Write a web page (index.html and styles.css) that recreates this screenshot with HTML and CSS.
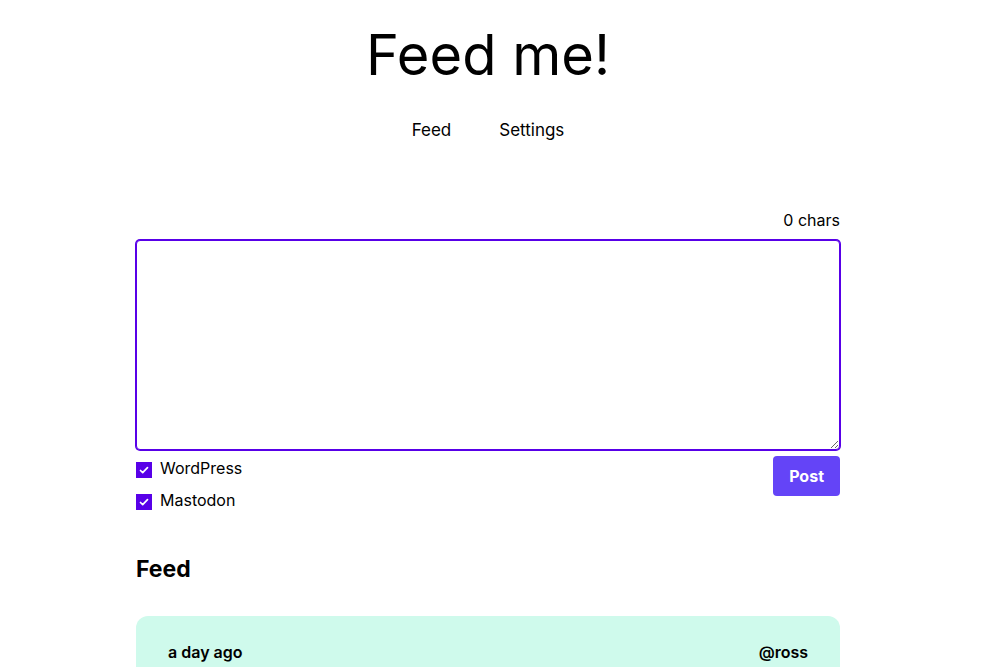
FILE: index.html
```html
<!DOCTYPE html>
<html lang="en">
<head>
<meta charset="utf-8">
<meta name="viewport" content="width=device-width, initial-scale=1">
<title>Feed me!</title>
<link rel="stylesheet" href="styles.css">
</head>
<body>
<div class="page">
  <header class="header">
    <h1 class="title">Feed me!</h1>
    <nav class="nav">
      <a class="nav-link" href="#feed">Feed</a>
      <a class="nav-link" href="#settings">Settings</a>
    </nav>
  </header>
  <main>
    <form class="composer">
      <label class="count" for="post">0 chars</label>
      <textarea class="editor" id="post"></textarea>
      <div class="actions">
        <div class="targets">
          <label class="target"><input class="check" type="checkbox" checked>WordPress</label>
          <label class="target"><input class="check" type="checkbox" checked>Mastodon</label>
        </div>
        <button class="submit" type="button">Post</button>
      </div>
    </form>
    <section id="feed">
      <h2 class="heading">Feed</h2>
      <article class="card">
        <span>a day ago</span>
        <span>@ross</span>
      </article>
    </section>
  </main>
</div>
</body>
</html>
```
FILE: styles.css
```css
* {
  box-sizing: border-box;
}

html {
  overflow: hidden;
}

body {
  margin: 0;
  padding: 24px 24px 0 0;
  background: #fff;
  color: #000;
  font: 16px/24px Inter, "Liberation Sans", sans-serif;
}

.page {
  max-width: 704px;
  margin: 0 auto;
}

.header {
  display: flex;
  flex-direction: column;
  align-items: center;
}

.title {
  margin: 0 0 30px;
  font-size: 56px;
  font-weight: 400;
  line-height: 62px;
}

.nav {
  display: flex;
  gap: 48px;
  margin-bottom: 64px;
  font-size: 17px;
  line-height: 28px;
}

.nav-link {
  color: inherit;
  text-decoration: none;
}

.composer {
  display: flex;
  flex-direction: column;
}

.count {
  align-self: flex-end;
  margin-bottom: 8px;
}

.editor {
  display: block;
  width: 100%;
  height: 210px;
  padding: 8px 12px;
  border: 1px solid #5800e8;
  border-radius: 4px;
  outline: none;
  box-shadow: 0 0 0 1px #5800e8;
  font: inherit;
  resize: vertical;
}

.actions {
  display: flex;
  align-items: flex-start;
  justify-content: space-between;
  padding-top: 6px;
}

.targets {
  display: flex;
  flex-direction: column;
  gap: 8px;
}

.target {
  display: flex;
  align-items: flex-end;
  gap: 8px;
}

.check {
  width: 16px;
  height: 16px;
  margin: 0 0 2px;
  appearance: none;
  background: #5800e8 url("data:image/svg+xml,%3Csvg viewBox='0 0 16 16' fill='none' stroke='white' stroke-width='1.7' stroke-linecap='round' stroke-linejoin='round' xmlns='http://www.w3.org/2000/svg'%3E%3Cpath d='M4.5 8.5l2.2 2.1 4.8-4.9'/%3E%3C/svg%3E") center / 100% no-repeat;
}

.submit {
  padding: 8px 16px;
  border: 0;
  border-radius: 4px;
  background: #6444f7;
  color: #fff;
  font: inherit;
  font-weight: 700;
}

.heading {
  margin: 40px 0 30px;
  font-size: 23px;
  font-weight: 700;
  line-height: 34px;
}

.card {
  display: flex;
  justify-content: space-between;
  padding: 24px 32px;
  border-radius: 12px;
  background: #cffaec;
  font-weight: 600;
}
```
